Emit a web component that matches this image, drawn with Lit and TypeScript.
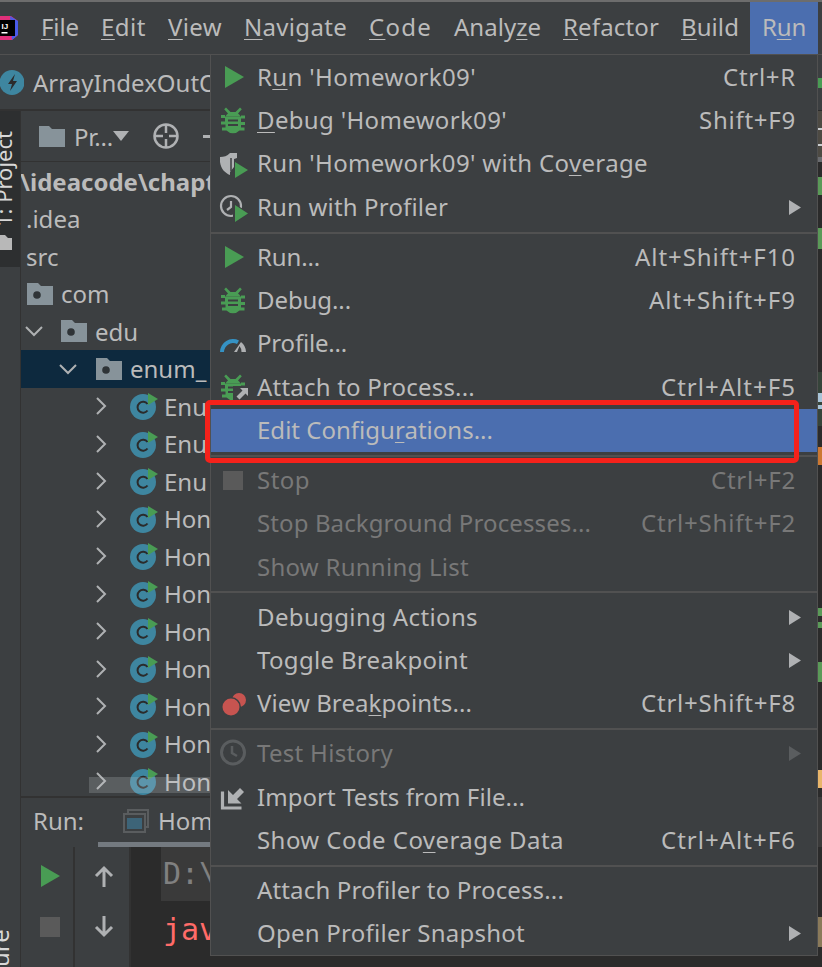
import { LitElement, html, css, svg } from "lit";
import { customElement } from "lit/decorators.js";

const bug = svg`<g fill="#499c54"><path d="M7 2.500l4.500 4.500h5L21 2.500l1.800 1.800L19 8.500a8 8 0 0 1 2.500 3H6.500a8 8 0 0 1 2.500-3L5.200 4.300z"/><path d="M6 11.500h16V10.500h4v3h-4v3.500h4v3h-4.500v-.5h.500v3h3.500v3h-5a9 9 0 0 1-13 0H3v-3h3.500v-3H2v-3h4v-3.500H2v-3h4z"/></g><path d="M9 15.500h10M9 20h10" stroke="#3c3f41" stroke-width="2"/>`;
const ICONS: Record<string, unknown> = {
  run: svg`<path d="M6 4 L25 15 L6 26 Z" fill="#499c54"/>`,
  debug: bug,
  cover: svg`<path d="M1 8c4 0 7-1 10-4h7v5l-3 1v8l-4 5 0 3c-5-2-9-6-10-13z" fill="#afb1b3"/><path d="M12 9v13" stroke="#3c3f41" stroke-width="1.500"/><path d="M16 13l13 8-13 8z" fill="#3c3f41" transform="translate(-1 0)"/><path d="M16 13l13 8-13 8z" fill="#499c54"/>`,
  profiler: svg`<circle cx="12" cy="14" r="10" fill="none" stroke="#afb1b3" stroke-width="2.200"/><path d="M12 9v6l-4 3" fill="none" stroke="#afb1b3" stroke-width="2.200"/><path d="M14 11l17 10-17 10z" fill="#3c3f41"/><path d="M16 13l13 8.500-13 8.500z" fill="#499c54"/>`,
  profile: svg`<path d="M1 23a13 13 0 0 1 19-11.500l-2 3.500A9 9 0 0 0 5 23z" fill="#3592c4"/><path d="M22 13a13 13 0 0 1 5 10h-4.500a9 9 0 0 0-2-6l-2.500 6h-3z" fill="#afb1b3"/>`,
  attach: svg`${bug}<path d="M14 14h16v16H14z" fill="#3c3f41"/><path d="M21 16h8v8l-2.500-2.500-6 6-3-3 6-6z" fill="#afb1b3"/>`,
  stop: svg`<rect x="4" y="6" width="20" height="19" fill="#5a5a5a"/>`,
  bp: svg`<circle cx="20" cy="11" r="7" fill="#c75450"/><circle cx="12" cy="18" r="10" fill="#3c3f41"/><circle cx="12" cy="18" r="8.500" fill="#c75450"/>`,
  history: svg`<circle cx="14" cy="14.400" r="11.500" fill="none" stroke="#5a5d5f" stroke-width="3"/><path d="M13 8v7l5 3" fill="none" stroke="#5a5d5f" stroke-width="2.500"/>`,
  imp: svg`<path d="M3.500 9.500v16.500h19" fill="none" stroke="#afb1b3" stroke-width="3.200"/><path d="M9 8v13.500h13.500l-4.500-4.500 7-7-4-4-7 7z" fill="#afb1b3"/>`,
};

type Item = { t?: unknown; w?: number; k?: string; kw?: number; i?: string; arrow?: boolean; off?: boolean; sel?: boolean; sep?: boolean };
const u = (a: string, b: string, c: string) => html`${a}<u>${b}</u>${c}`;
const ITEMS: Item[] = [
  { t: u("R", "u", "n 'Homework09'"), w: 219, k: "Ctrl+R", kw: 73, i: "run" },
  { t: u("", "D", "ebug 'Homework09'"), w: 250, k: "Shift+F9", kw: 97, i: "debug" },
  { t: u("Run 'Homework09' with Co", "v", "erage"), w: 391, i: "cover" },
  { t: "Run with Profiler", w: 191, i: "profiler", arrow: true },
  { sep: true },
  { t: "Run...", w: 63, k: "Alt+Shift+F10", kw: 161, i: "run" },
  { t: "Debug...", w: 94, k: "Alt+Shift+F9", kw: 147, i: "debug" },
  { t: "Profile...", w: 90, i: "profile" },
  { t: "Attach to Process...", w: 218, k: "Ctrl+Alt+F5", kw: 135, i: "attach" },
  { t: u("Edit Configu", "r", "ations..."), w: 236, sel: true },
  { sep: true },
  { t: "Stop", w: 53, k: "Ctrl+F2", kw: 85, i: "stop", off: true },
  { t: "Stop Background Processes...", w: 334, k: "Ctrl+Shift+F2", kw: 155, off: true },
  { t: "Show Running List", w: 212, off: true },
  { sep: true },
  { t: "Debugging Actions", w: 221, arrow: true },
  { t: "Toggle Breakpoint", w: 211, arrow: true },
  { t: u("View Brea", "k", "points..."), w: 215, k: "Ctrl+Shift+F8", kw: 155, i: "bp" },
  { sep: true },
  { t: "Test History", w: 136, i: "history", off: true, arrow: true },
  { t: "Import Tests from File...", w: 268, i: "imp" },
  { t: u("Show Code Co", "v", "erage Data"), w: 307, k: "Ctrl+Alt+F6", kw: 135 },
  { sep: true },
  { t: "Attach Profiler to Process...", w: 307 },
  { t: "Open Profiler Snapshot", w: 268, arrow: true },
];

const MENUS: [string, string, string, number][] = [
  ["", "F", "ile", 38], ["", "E", "dit", 45], ["", "V", "iew", 54], ["", "N", "avigate", 103], ["", "C", "ode", 63],
  ["Analy", "z", "e", 87], ["", "R", "efactor", 96], ["", "B", "uild", 58],
];

const TREE: [number, string, string][] = [
  [0, "", ".idea"], [0, "", "src"], [1, "f", "com"], [2, "f", "edu"], [3, "f", "enum_"],
  ...["Enu", "Enu", "Enu", "Hon", "Hon", "Hon", "Hon", "Hon", "Hon", "Hon", "Hon"].map(
    (n) => [4, "c", n] as [number, string, string]
  ),
];
const INDENT = [5, 6, 1, 35, 68];
const ICON_GAP = [0, 0, 15, 16, 17];

const EDGE: [number, number, string][] = [
  [55, 55, "#3c3f41"], [78, 10, "#499c54"], [111, 46, "#4d4a43"], [128, 2, "#c9cdd0"], [144, 2, "#c9cdd0"],
  [157, 5, "#6a6c70"], [177, 18, "#5a9a58"], [228, 21, "#5a9a58"],
  [372, 54, "#36443a"], [393, 9, "#a9c4d8"], [405, 4, "#a9c4d8"], [447, 18, "#cc7832"],
  [608, 8, "#5a9a58"], [622, 6, "#5a9a58"], [662, 20, "#5a9a58"], [770, 18, "#e8b56a"],
  [797, 50, "#3a3a3a"], [917, 30, "#8a7a5a"],
];

@customElement("app-root")
export class AppRoot extends LitElement {
  static styles = css`
    :host { display: block; width: 822px; height: 967px; overflow: hidden; position: relative; background: #3c3f41;
      font-family: "Noto Sans", "Open Sans", sans-serif; font-size: 24px; color: #bbbbbb; }
    u { text-underline-offset: 3px; text-decoration-thickness: 1px; }
    .frame { display: flex; flex-direction: column; height: 967px; border-top: 2px solid #6d6d6d; box-sizing: border-box; }
    .bar { display: flex; align-items: stretch; height: 52px; flex: none; border-bottom: 1px solid #515151; }
    .logo { width: 18px; flex: none; display: flex; align-items: center; margin-right: 12px; }
    .mi { display: flex; align-items: center; padding: 0 11px 3px; white-space: nowrap; }
    .mi.active { background: #4b6eaf; margin-left: auto; margin-right: 4px; padding: 0 12px 3px; }
    .crumb { height: 54px; flex: none; display: flex; align-items: center; gap: 9px; border-bottom: 2px solid #323232; white-space: nowrap; overflow: hidden; }
    .main { flex: 1; display: flex; min-height: 0; }
    .stripe { width: 20px; flex: none; border-right: 1px solid #323232; display: flex; flex-direction: column; justify-content: space-between; overflow: hidden; }
    .tab { background: #2d2f30; height: 136px; padding-top: 20px; color: #d8d8d8; font-size: 22px; display: flex; flex-direction: column; align-items: flex-start; white-space: nowrap; }
    .tab span { writing-mode: vertical-rl; transform: rotate(180deg); line-height: 21px; margin-left: -7px; }
    .tab svg { margin-top: 8px; flex: none; }
    .side { color: #d8d8d8; line-height: 21px; writing-mode: vertical-rl; transform: rotate(180deg); height: 30px; margin-left: -11px; white-space: nowrap; }
    .col { flex: 1; display: flex; flex-direction: column; min-width: 0; overflow: hidden; }
    .tools { height: 51px; flex: none; display: flex; align-items: center; border-bottom: 1px solid #323232; box-sizing: border-box; padding-left: 18px; white-space: nowrap; }
    .pr { margin-left: 9px; }
    .target { margin-left: 24px; flex: none; }
    .minus { margin-left: 24px; flex: none; }
    .path { height: 38px; flex: none; font-weight: 700; white-space: nowrap; display: flex; align-items: center; margin-left: -1px; }
    .tree { height: 596px; flex: none; position: relative; overflow: hidden; }
    .row { height: 37.500px; display: flex; align-items: center; white-space: nowrap; box-sizing: border-box; }
    .row.sel { background: #0d293e; }
    .chev { width: 24px; flex: none; display: flex; justify-content: center; }
    .label { display: flex; align-items: center; gap: 8px; }
    .cicon { margin-right: -2px; }
    .thumb { position: absolute; left: 68px; top: 577px; width: 130px; height: 16px; background: rgba(200, 205, 210, 0.22); }
    .runbar { height: 45px; padding-bottom: 4px; flex: none; border-top: 2px solid #323232; display: flex; align-items: center; white-space: nowrap; position: relative; padding-left: 12px; gap: 39px; }
    .runtab { display: flex; align-items: center; gap: 9px; }
    .underline { position: absolute; left: 77px; right: 0; bottom: 0; height: 5px; background: #747a80; }
    .runmain { flex: 1; display: flex; min-height: 0; }
    .tcol { width: 47px; padding-left: 5px; flex: none; border-right: 2px solid #323232; display: flex; flex-direction: column; align-items: center; padding-top: 18px; }
    .tcol.b { width: 50px; padding-left: 4px; }
    .tcol svg { flex: none; }
    .tcol svg + svg { margin-top: 30px; }
    .tcol.b svg + svg { margin-top: 29px; }
    .console { flex: 1; background: #2b2b2b; font-family: "DejaVu Sans Mono", "Liberation Mono", monospace; font-size: 30px; white-space: nowrap; overflow: hidden; padding-left: 30px; }
    .l1 { background: #3a3a3a; color: #808080; height: 54px; line-height: 54px; padding-left: 2px; }
    .l2 { color: #ff6b68; padding-left: 2px; line-height: 58px; }
    .edge { position: absolute; left: 817px; top: 55px; width: 5px; height: 912px; overflow: hidden; background: #2b2b2b; }
    .edge i { position: absolute; left: 0; width: 5px; display: block; margin-top: -55px; }
    .popup { position: absolute; left: 210px; top: 54px; width: 608px; height: 902px; box-sizing: border-box; background: #3c3f41; border: 1px solid #515151; }
    .item { height: 43.400px; box-sizing: border-box; display: flex; align-items: center; white-space: nowrap; position: relative; padding: 0 21px 1px 46px; }
    .item.off { color: #787878; }
    .item.sel { background: #4b6eaf; }
    .item .ic { position: absolute; left: 8px; top: 7px; }
    .item .k { margin-left: auto; }
    .item .ar { position: absolute; right: 16px; top: 15px; }
    .sep { height: 6.400px; box-sizing: border-box; padding-top: 3px; }
    .sep::before { content: ""; display: block; height: 2px; background: #515151; }
    .mark { position: absolute; left: 205px; top: 400px; width: 594px; height: 63px; box-sizing: border-box; border: 5px solid #f5221b; border-radius: 5px; }
  `;

  firstUpdated() {
    this.renderRoot.querySelectorAll<HTMLElement>("[data-w]").forEach((el) => {
      const target = Number(el.dataset.w);
      const n = (el.textContent || "").trim().length;
      const cur = el.getBoundingClientRect().width;
      el.style.letterSpacing = `${(target - cur) / n}px`;
    });
  }

  private chev(open: boolean) {
    return html`<svg width="18" height="18" viewBox="0 0 18 18"><path d="${open ? "M1 5l8 8 8-8" : "M5 1l8 8-8 8"}" fill="none" stroke="#afb1b3" stroke-width="2"/></svg>`;
  }

  private treeIcon(kind: string) {
    if (kind === "f")
      return html`<svg width="26" height="22" viewBox="0 0 26 22"><path d="M0 0h11l3 3h12v19H0z" fill="#87939a"/><circle cx="10" cy="12" r="3.800" fill="#2f3437"/></svg>`;
    if (kind === "c")
      return html`<svg class="cicon" width="28" height="30" viewBox="0 0 28 30"><circle cx="13" cy="16" r="13" fill="#3e86a0"/><path d="M17.500 13a5.500 5.500 0 1 0 0 6.500" fill="none" stroke="#2b2b2b" stroke-width="2"/><path d="M18 2l10 6-10 6z" fill="#499c54"/></svg>`;
    return "";
  }

  render() {
    return html`
      <div class="frame">
        <div class="bar">
          <div class="logo">
            <svg width="18" height="24" viewBox="0 0 18 24">
              <path d="M0 0h11l7 5v14l-6 5H0z" fill="#e0307a"/>
              <path d="M10 0l8 5v14l-6 5z" fill="#4a5be8"/>
              <rect x="0" y="4" width="15" height="16" fill="#000"/>
              <text x="1.500" y="12.500" font-size="8" font-weight="700" fill="#fff" font-family="Liberation Sans">IJ</text>
              <rect x="1.500" y="16" width="6" height="1.500" fill="#fff"/>
            </svg>
          </div>
          ${MENUS.map((m) => html`<div class="mi"><span data-w="${m[3]}">${u(m[0], m[1], m[2])}</span></div>`)}
          <div class="mi active"><span data-w="44">${u("R", "u", "n")}</span></div>
        </div>
        <div class="crumb">
          <svg width="24" height="25" viewBox="0 0 24 25"><circle cx="12" cy="12.500" r="12.500" fill="#3e86a0"/><path d="M15 4l-7 10h4l-2 7 7-10h-4z" fill="#2b2b2b"/></svg>
          <span>ArrayIndexOutOfBoundsException</span>
        </div>
        <div class="main">
          <div class="stripe">
            <div class="tab"><span>1: Project</span>
              <svg width="12" height="15" viewBox="0 0 12 15"><path d="M0 0h5l3 3h4v12H0z" fill="#b8b8b8"/></svg>
            </div>
            <div class="side">ure</div>
          </div>
          <div class="col">
            <div class="tools">
              <svg width="26" height="21" viewBox="0 0 26 21"><path d="M0 0h10l3 3h13v18H0z" fill="#87939a"/></svg>
              <span class="pr" data-w="39">Pr...</span>
              <svg width="16" height="10" viewBox="0 0 16 10"><path d="M0 0h16l-8 10z" fill="#afb1b3"/></svg>
              <svg class="target" width="26" height="26" viewBox="0 0 26 26"><circle cx="13" cy="13" r="11.500" fill="none" stroke="#afb1b3" stroke-width="2.500"/><path d="M13 2v8M13 16v8M2 13h8M16 13h8" stroke="#afb1b3" stroke-width="2.500"/></svg>
              <svg class="minus" width="8" height="3" viewBox="0 0 8 3"><rect width="8" height="3" fill="#afb1b3"/></svg>
            </div>
            <div class="path">\\ideacode\\chapter09</div>
            <div class="tree">
              ${TREE.map((r, i) => html`
                <div class="row ${i === 4 ? "sel" : ""}" style="padding-left:${INDENT[r[0]]}px">
                  ${r[0] >= 2 ? html`<span class="chev">${this.chev(r[0] !== 4)}</span>` : ""}
                  <span class="label" style="margin-left:${ICON_GAP[r[0]]}px">${this.treeIcon(r[1])}${r[2]}</span>
                </div>`)}
              <div class="thumb"></div>
            </div>
            <div class="runbar">
              <span data-w="51">Run:</span>
              <span class="runtab">
                <svg width="26" height="24" viewBox="0 0 26 24"><path d="M5 4V1h20v17h-3" fill="none" stroke="#5a5d5f" stroke-width="2"/><rect x="1" y="5" width="21" height="18" fill="none" stroke="#5a5d5f" stroke-width="2"/><rect x="4" y="9" width="15" height="11" fill="#3d6478"/></svg>
                Homework09
              </span>
              <div class="underline"></div>
            </div>
            <div class="runmain">
              <div class="tcol">
                <svg width="20" height="22" viewBox="0 0 20 22"><path d="M1 0 L20 11 L1 22 Z" fill="#499c54"/></svg>
                <svg width="20" height="20" viewBox="0 0 20 20"><rect width="20" height="20" fill="#5a5a5a"/></svg>
              </div>
              <div class="tcol b">
                <svg width="20" height="22" viewBox="0 0 20 22"><path d="M10 22V3M2 11l8-8 8 8" fill="none" stroke="#afb1b3" stroke-width="3"/></svg>
                <svg width="20" height="22" viewBox="0 0 20 22"><path d="M10 0v19M2 11l8 8 8-8" fill="none" stroke="#afb1b3" stroke-width="3"/></svg>
              </div>
              <div class="console">
                <div class="l1">D:\\</div>
                <div class="l2">java</div>
              </div>
            </div>
          </div>
        </div>
      </div>
      <div class="edge">
        ${EDGE.map((e) => html`<i style="top:${e[0]}px;height:${e[1]}px;background:${e[2]}"></i>`)}
      </div>
      <div class="popup">
        ${ITEMS.map((it) => it.sep ? html`<div class="sep"></div>` : html`
          <div class="item ${it.off ? "off" : ""} ${it.sel ? "sel" : ""}">
            ${it.i ? html`<svg class="ic" width="32" height="32" viewBox="0 0 32 32">${ICONS[it.i]}</svg>` : ""}
            <span data-w="${it.w}">${it.t}</span>
            ${it.k ? html`<span class="k" data-w="${it.kw}">${it.k}</span>` : ""}
            ${it.arrow ? html`<svg class="ar" width="12" height="15" viewBox="0 0 12 15"><path d="M0 0l12 7.500-12 7.500z" fill="${it.off ? "#5a5d5f" : "#afb1b3"}"/></svg>` : ""}
          </div>`)}
      </div>
      <div class="mark"></div>
    `;
  }
}
